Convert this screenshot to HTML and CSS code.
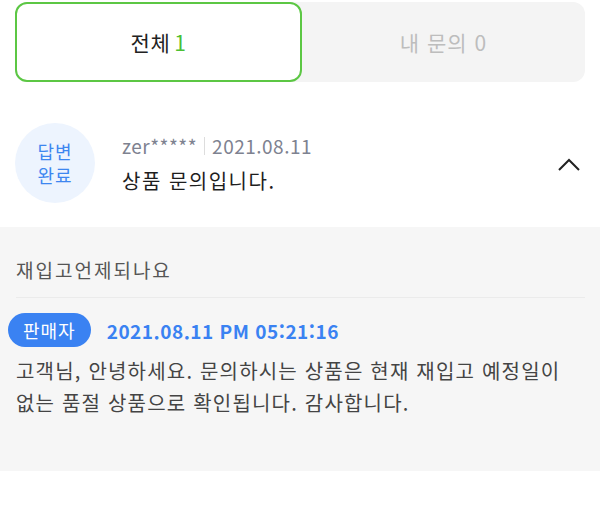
FILE: index.html
```html
<!DOCTYPE html>
<html lang="ko">
<head>
    <meta charset="UTF-8">
    <meta name="viewport" content="width=device-width, initial-scale=1.0">
    <title>상품 문의</title>
    <link rel="stylesheet" href="styles.css">
</head>
<body>
    <div class="tabs">
        <div class="tab active">전체 <span class="count">1</span></div>
        <div class="tab">내 문의 0</div>
    </div>

    <div class="question">
        <div class="status">답변<br>완료</div>
        <div class="q-body">
            <div class="meta">
                <span class="writer">zer*****</span>
                <span class="bar"></span>
                <span class="date">2021.08.11</span>
            </div>
            <div class="title">상품 문의입니다.</div>
        </div>
        <svg class="chevron" width="24" height="14" viewBox="0 0 24 14">
            <path d="M2 12 L12 2 L22 12" fill="none" stroke="#222" stroke-width="2"/>
        </svg>
    </div>

    <div class="detail">
        <p class="q-text">재입고언제되나요</p>
        <div class="answer-head">
            <span class="badge">판매자</span>
            <span class="answer-date">2021.08.11 PM 05:21:16</span>
        </div>
        <p class="answer">고객님, 안녕하세요. 문의하시는 상품은 현재 재입고 예정일이 없는 품절 상품으로 확인됩니다. 감사합니다.</p>
    </div>
</body>
</html>
```

FILE: styles.css
```css
body { margin: 0; font-family: "Noto Sans CJK KR", "Noto Sans", sans-serif; background: #fff; color: #222; }
.tabs { display: flex; margin: 2px 15px 0; background: #f4f4f4; border-radius: 12px; height: 80px; }
.tab { flex: 1; display: flex; align-items: center; justify-content: center; font-size: 21px; letter-spacing: 1px; color: #bdbdbd; }
.tab.active { background: #fff; border: 2px solid #5cc744; border-radius: 12px; color: #222; box-sizing: border-box; letter-spacing: 0.5px; }
.count { color: #4cc034; margin-left: 4px; }
.question { display: flex; align-items: center; padding: 41px 19px 24px 15px; }
.status { width: 80px; height: 80px; border-radius: 50%; background: #edf4fe; color: #3d86f0; font-size: 18px; letter-spacing: 1px; line-height: 24px; display: flex; align-items: center; justify-content: center; text-align: center; flex-shrink: 0; }
.q-body { flex: 1; margin-left: 27px; padding-top: 2px; }
.meta { display: flex; align-items: center; font-size: 19px; letter-spacing: 0.5px; color: #7e8290; line-height: 24px; }
.bar { width: 1px; height: 18px; background: #ddd; margin: 0 7px; }
.title { font-size: 20px; letter-spacing: 1.5px; line-height: 28px; margin-top: 9px; color: #1e1e1e; }
.chevron { flex-shrink: 0; margin-top: 4px; }
.detail { background: #f6f6f6; padding: 1px 15px 0 16px; height: 244px; box-sizing: border-box; }
.q-text { margin: 29px 0 0; font-size: 19px; letter-spacing: 2px; color: #555; line-height: 26px; padding-bottom: 14px; border-bottom: 1px solid #ebebeb; }
.answer-head { display: flex; align-items: center; margin: 15px 0 0 -8px; }
.badge { background: #3a82f2; color: #fff; font-size: 18px; letter-spacing: 1px; height: 34px; line-height: 34px; padding: 0 15px; border-radius: 17px; }
.answer-date { color: #3a82f2; font-size: 19px; letter-spacing: 0.5px; font-weight: 700; margin-left: 16px; }
.answer { margin: 8px 0 0; font-size: 20px; letter-spacing: 1.2px; line-height: 32px; color: #444; }
```
